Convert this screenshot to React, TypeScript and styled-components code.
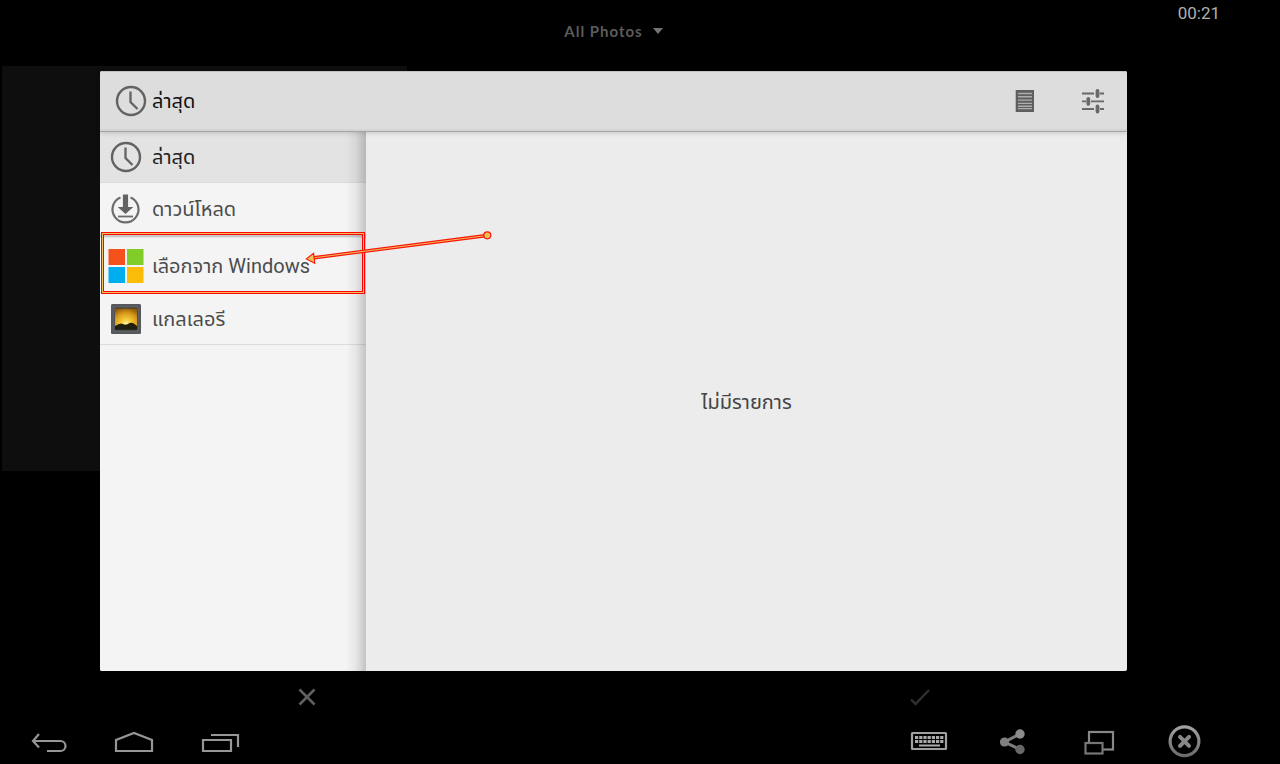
import React from "react";
import styled, { createGlobalStyle } from "styled-components";

const GlobalStyle = createGlobalStyle`
  *, *::before, *::after { box-sizing: border-box; }
  body { margin: 0; background: #000; font-family: Roboto, "Noto Sans Thai", "Droid Sans Thai", "Noto Sans", sans-serif; }
  button { margin: 0; padding: 0; border: 0; background: none; font: inherit; color: inherit; cursor: pointer; }
  svg { display: block; flex: none; }
`;

const Screen = styled.div`
  position: relative;
  display: flex;
  flex-direction: column;
  min-height: 100vh;
`;

const StatusBar = styled.div`
  height: 22px;
  padding: 4px 60px 0 0;
  text-align: right;
  font-size: 17px;
  line-height: 18px;
  color: #b0b0b0;
`;

const AlbumBar = styled.header`
  display: flex;
  justify-content: center;
  align-items: flex-start;
  height: 49px;
  padding-right: 53px;
`;

const AlbumButton = styled.button`
  display: flex;
  align-items: center;
  gap: 10px;
  font-family: Lato, sans-serif;
  font-size: 15px;
  font-weight: 700;
  line-height: 18px;
  letter-spacing: 1px;
  color: #5c5c5c;
`;

const PhotoTile = styled.div`
  position: absolute;
  top: 66px;
  left: 2px;
  width: 405px;
  height: 405px;
  background: #0e0e0e;
`;

const Dialog = styled.main`
  position: relative;
  flex: 1;
  display: flex;
  flex-direction: column;
  margin: 0 153px 0 100px;
  background: #ececec;
  border-radius: 2px;
`;

const DialogHeader = styled.div`
  position: relative;
  z-index: 1;
  display: flex;
  align-items: center;
  height: 60px;
  padding: 0 0 2px 10px;
  background: #dddddd;
  border-top: 1px solid #c4c0c0;
  border-radius: 2px 2px 0 0;
  box-shadow: inset 0 -2px 0 #d4d4d4, 0 1px 0 #a4a4a4, 0 2px 5px rgba(0, 0, 0, 0.16);
`;

const DialogTitle = styled.h1`
  flex: 1;
  margin: 0;
  font-size: 20px;
  font-weight: 400;
  line-height: 28px;
  color: #111;
`;

const IconSlot = styled.span<{ $width: number }>`
  display: flex;
  flex: none;
  justify-content: center;
  width: ${(p) => p.$width}px;
`;

const HeaderAction = styled.button`
  display: flex;
  justify-content: center;
  align-items: center;
  width: 68px;
  height: 56px;
`;

const DialogBody = styled.div`
  flex: 1;
  display: flex;
`;

const Sidebar = styled.nav`
  position: relative;
  flex: none;
  width: 266px;
  background: #f4f4f4;
  border-radius: 0 0 0 2px;

  &::after {
    content: "";
    position: absolute;
    inset: 0 0 0 auto;
    width: 20px;
    background: linear-gradient(to right, rgba(0, 0, 0, 0), rgba(0, 0, 0, 0.06) 50%, rgba(0, 0, 0, 0.2));
    pointer-events: none;
  }
`;

const SourceButton = styled.button<{ $selected?: boolean; $tall?: boolean }>`
  display: flex;
  align-items: center;
  width: 100%;
  height: ${(p) => (p.$tall ? 58 : 52)}px;
  padding-top: ${(p) => (p.$tall ? 4 : 0)}px;
  background: ${(p) => (p.$selected ? "#e3e3e3" : "transparent")};
  border-bottom: 1px solid #dcdcdc;
  box-shadow: ${(p) => (p.$tall ? "inset 0 2px 0 #cacaca, inset 0 3px 0 #e2e2e2" : "none")};
  font-size: 20px;
  line-height: 28px;
  text-align: left;
  color: ${(p) => (p.$selected ? "#222" : "#4c4c4c")};
`;

const EmptyPane = styled.section`
  flex: 1;
  display: flex;
  justify-content: center;
  align-items: center;
  padding-top: 2px;
  font-size: 20px;
  line-height: 28px;
  color: #444;
`;

const Annotation = styled.svg`
  position: absolute;
  top: 0;
  left: 0;
  z-index: 2;
  pointer-events: none;
`;

const ActionBar = styled.div`
  display: flex;
  height: 51px;
  padding-right: 53px;
`;

const ActionButton = styled.button`
  flex: 1;
  display: flex;
  justify-content: center;
  align-items: center;
`;

const SystemBar = styled.footer`
  display: flex;
  justify-content: space-between;
  height: 42px;
  padding: 0 53px 0 5px;
`;

const KeyGroup = styled.div`
  display: flex;
`;

const KeyButton = styled.button`
  height: 38px;
`;

function ClockIcon() {
  return (
    <svg width="32" height="32" viewBox="0 0 32 32" fill="none" stroke="#636363">
      <circle cx="16" cy="16" r="14" strokeWidth="2.4" />
      <path d="M15.5 6.5V17L22.5 24" strokeWidth="2.3" />
    </svg>
  );
}

function DownloadIcon() {
  return (
    <svg width="32" height="32" viewBox="0 0 32 32" fill="none" stroke="#6c6c6c" strokeWidth="2.2">
      <path d="M10.5 4.4A13 13 0 1 0 20.5 4.4" />
      <path d="M12.9 1.5h5.2v12.5h5.2L15.5 21 7.7 14h5.2z" fill="#636363" stroke="none" />
      <path d="M8 23.5h15" strokeWidth="1.8" />
    </svg>
  );
}

function WindowsIcon() {
  return (
    <svg width="36" height="36" viewBox="0 0 36 36">
      <path d="M.5 1H17v16H.5z" fill="#f4511c" />
      <path d="M19 1h16.5v16H19z" fill="#80cc28" />
      <path d="M.5 19H17v16H.5z" fill="#00adef" />
      <path d="M19 19h16.5v16H19z" fill="#fbbc09" />
    </svg>
  );
}

function GalleryIcon() {
  return (
    <svg width="32" height="32" viewBox="0 0 32 32">
      <defs>
        <radialGradient id="sunset" cx="0.5" cy="0.75" r="0.8">
          <stop offset="0" stopColor="#fff6a8" />
          <stop offset="0.25" stopColor="#f6cf3c" />
          <stop offset="0.65" stopColor="#d99b1c" />
          <stop offset="1" stopColor="#8f5a0c" />
        </radialGradient>
      </defs>
      <rect x="1" y="1" width="30" height="30" rx="1.5" fill="#4a4c4e" />
      <rect x="2" y="2" width="28" height="28" fill="none" stroke="#626568" />
      <rect x="4" y="4" width="24" height="24" fill="#303235" stroke="#7c7f82" strokeWidth="0.8" />
      <rect x="5" y="5.5" width="22" height="20.5" fill="url(#sunset)" />
      <path d="M5 23Q8.5 20.5 11.5 20.5L15 21.7 17.5 21.2Q21 19 23.5 20.3L27 23V26.5H5z" fill="#20200c" />
    </svg>
  );
}

function ListIcon() {
  return (
    <svg width="20" height="24" viewBox="0 0 20 24">
      <path d="M.7 1h18.3v22H.7z" fill="#5f5f5f" />
      <path d="M3 4.5h14M3 7.8h14M3 11.1h14M3 14.4h14M3 17.2h14M3 19.6h14" stroke="#adadad" strokeWidth="1.4" />
    </svg>
  );
}

function SlidersIcon() {
  return (
    <svg width="24" height="26" viewBox="0 0 24 26" stroke="#696969">
      <path d="M1 5.5h12M19 5.5h4M1 13.3h4M10 13.3h13M1 21h12M19 21h4" strokeWidth="1.8" />
      <path d="M16.5 3v5M7.3 10.8v5M16.5 18.5v5" strokeWidth="3.8" strokeLinecap="round" />
    </svg>
  );
}

type KeyIconProps = { width: number; children: React.ReactNode };

function KeyIcon({ width, children }: KeyIconProps) {
  return (
    <svg
      width={width}
      height="38"
      viewBox={`${-width / 2} -19 ${width} 38`}
      fill="none"
      stroke="#969696"
      strokeWidth="2.2"
    >
      {children}
    </svg>
  );
}

const keyColumns = [0, 1, 2, 3, 4, 5, 6];

export default function App() {
  return (
    <>
      <GlobalStyle />
      <Screen>
        <PhotoTile />
        <StatusBar>00:21</StatusBar>
        <AlbumBar>
          <AlbumButton>
            All Photos
            <svg width="10" height="6" viewBox="0 0 10 6" fill="#747474">
              <path d="M0 0h10L5 6z" />
            </svg>
          </AlbumButton>
        </AlbumBar>

        <Dialog>
          <DialogHeader>
            <IconSlot $width={42}>
              <ClockIcon />
            </IconSlot>
            <DialogTitle>ล่าสุด</DialogTitle>
            <HeaderAction aria-label="List view">
              <ListIcon />
            </HeaderAction>
            <HeaderAction aria-label="Sort options">
              <SlidersIcon />
            </HeaderAction>
          </DialogHeader>
          <DialogBody>
            <Sidebar>
              <SourceButton $selected>
                <IconSlot $width={52}>
                  <ClockIcon />
                </IconSlot>
                ล่าสุด
              </SourceButton>
              <SourceButton>
                <IconSlot $width={52}>
                  <DownloadIcon />
                </IconSlot>
                ดาวน์โหลด
              </SourceButton>
              <SourceButton $tall>
                <IconSlot $width={52}>
                  <WindowsIcon />
                </IconSlot>
                เลือกจาก Windows
              </SourceButton>
              <SourceButton>
                <IconSlot $width={52}>
                  <GalleryIcon />
                </IconSlot>
                แกลเลอรี
              </SourceButton>
            </Sidebar>
            <EmptyPane>ไม่มีรายการ</EmptyPane>
          </DialogBody>
          <Annotation width="400" height="230" viewBox="0 0 400 230" fill="none">
            <rect x="2.5" y="162.5" width="261" height="59" stroke="#fb0505" strokeWidth="3" />
            <rect x="2.5" y="162.5" width="261" height="59" stroke="#f0c060" strokeWidth="1" />
            <path d="M387 164.5L212 187" stroke="#fb1505" strokeWidth="3.4" />
            <path d="M387 164.5L212 187" stroke="#eeb65c" strokeWidth="1.1" />
            <path d="M206.3 187.9L213.6 182.2L214.8 192.2z" fill="#e8c158" stroke="#fb1505" strokeWidth="1.1" />
            <circle cx="387.3" cy="164.3" r="3.5" fill="#e8c158" stroke="#fb1505" strokeWidth="1.2" />
          </Annotation>
        </Dialog>

        <ActionBar>
          <ActionButton aria-label="Cancel">
            <svg width="18" height="18" viewBox="0 0 18 18" stroke="#606060" strokeWidth="2.6">
              <path d="M1.5 1.5l15 15M16.5 1.5l-15 15" />
            </svg>
          </ActionButton>
          <ActionButton aria-label="Confirm">
            <svg width="20" height="18" viewBox="0 0 20 18" fill="none" stroke="#303030" strokeWidth="2.4">
              <path d="M1 11.5L5.5 16 19 2" />
            </svg>
          </ActionButton>
        </ActionBar>

        <SystemBar>
          <KeyGroup>
            <KeyButton aria-label="Back">
              <KeyIcon width={86}>
                <path d="M-9 -7L-15 0L-9 6.5M-15 0H12.5A5 5 0 0 1 12.5 10H-1" />
              </KeyIcon>
            </KeyButton>
            <KeyButton aria-label="Home">
              <KeyIcon width={86}>
                <path d="M-18 10V-1L0 -8L18 -1V10z" />
              </KeyIcon>
            </KeyButton>
            <KeyButton aria-label="Recent apps">
              <KeyIcon width={86}>
                <path d="M-17 -1H11V10H-17zM-9 -6H18V6" />
              </KeyIcon>
            </KeyButton>
          </KeyGroup>
          <KeyGroup>
            <KeyButton aria-label="Keyboard">
              <KeyIcon width={85}>
                <rect x="-17.5" y="-8" width="34" height="16" rx="0.5" stroke="#a0a0a0" />
                <g fill="#aaa" stroke="none">
                  {keyColumns.map((c) => (
                    <React.Fragment key={c}>
                      <rect x={-14.5 + c * 4.2} y="-5" width="3.2" height="3" />
                      <rect x={-14.5 + c * 4.2} y="-1" width="3.2" height="3" />
                    </React.Fragment>
                  ))}
                  <rect x="-10.5" y="3.5" width="21" height="2" />
                </g>
              </KeyIcon>
            </KeyButton>
            <KeyButton aria-label="Share">
              <KeyIcon width={85}>
                <path d="M5.5 -7L-10 1L5.5 8.5" stroke="#7c7c7c" strokeWidth="3" />
                <circle cx="5.5" cy="-7" r="4.7" fill="#8c8c8c" stroke="none" />
                <circle cx="-10" cy="1" r="4.6" fill="#808080" stroke="none" />
                <circle cx="5.5" cy="8.5" r="4.7" fill="#686868" stroke="none" />
              </KeyIcon>
            </KeyButton>
            <KeyButton aria-label="Windowed mode">
              <KeyIcon width={85}>
                <rect x="-10.5" y="-9" width="24" height="17.5" stroke="#888" />
                <rect x="-14" y="2" width="17" height="10.5" fill="#000" stroke="#767676" />
              </KeyIcon>
            </KeyButton>
            <KeyButton aria-label="Close">
              <KeyIcon width={85}>
                <defs>
                  <linearGradient id="ring" x1="0" y1="0" x2="0" y2="1">
                    <stop offset="0" stopColor="#a2a2a2" />
                    <stop offset="1" stopColor="#6c6c6c" />
                  </linearGradient>
                </defs>
                <circle cx="0" cy="0.3" r="14.4" stroke="url(#ring)" strokeWidth="3.2" />
                <path d="M-4.5 -4.2L4.5 4.8M4.5 -4.2L-4.5 4.8" stroke="#888" strokeWidth="4" strokeLinecap="round" />
              </KeyIcon>
            </KeyButton>
          </KeyGroup>
        </SystemBar>
      </Screen>
    </>
  );
}
